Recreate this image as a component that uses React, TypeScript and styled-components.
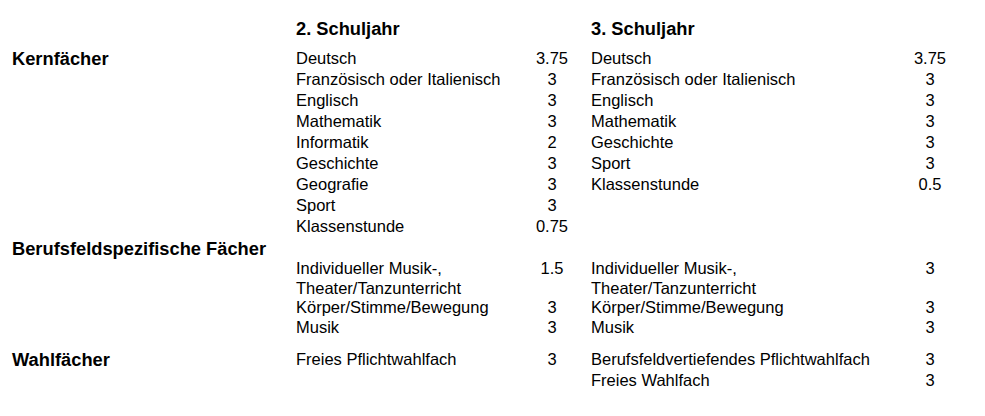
import styled, { createGlobalStyle } from 'styled-components';

type Subject = { name: string[]; hours: string };

type Section = {
  title: string;
  stacked?: boolean;
  lineHeight: number;
  gapTop: number;
  second: Subject[];
  third: Subject[];
};

const s = (name: string | string[], hours: string): Subject => ({
  name: Array.isArray(name) ? name : [name],
  hours,
});

const sections: Section[] = [
  {
    title: 'Kernfächer',
    lineHeight: 21,
    gapTop: 0,
    second: [
      s('Deutsch', '3.75'),
      s('Französisch oder Italienisch', '3'),
      s('Englisch', '3'),
      s('Mathematik', '3'),
      s('Informatik', '2'),
      s('Geschichte', '3'),
      s('Geografie', '3'),
      s('Sport', '3'),
      s('Klassenstunde', '0.75'),
    ],
    third: [
      s('Deutsch', '3.75'),
      s('Französisch oder Italienisch', '3'),
      s('Englisch', '3'),
      s('Mathematik', '3'),
      s('Geschichte', '3'),
      s('Sport', '3'),
      s('Klassenstunde', '0.5'),
    ],
  },
  {
    title: 'Berufsfeldspezifische Fächer',
    stacked: true,
    lineHeight: 19.7,
    gapTop: 1,
    second: [
      s(['Individueller Musik-,', 'Theater/Tanzunterricht'], '1.5'),
      s('Körper/Stimme/Bewegung', '3'),
      s('Musik', '3'),
    ],
    third: [
      s(['Individueller Musik-,', 'Theater/Tanzunterricht'], '3'),
      s('Körper/Stimme/Bewegung', '3'),
      s('Musik', '3'),
    ],
  },
  {
    title: 'Wahlfächer',
    lineHeight: 21,
    gapTop: 11,
    second: [s('Freies Pflichtwahlfach', '3')],
    third: [
      s('Berufsfeldvertiefendes Pflichtwahlfach', '3'),
      s('Freies Wahlfach', '3'),
    ],
  },
];

function YearList({ items, wide, lineHeight }: { items: Subject[]; wide?: boolean; lineHeight: number }) {
  return (
    <YearGrid $wide={wide} $lh={lineHeight}>
      {items.map((item, i) => (
        <Row key={i}>
          <SubjectName>
            {item.name.map((line, j) => (
              <span key={j}>
                {j > 0 && <br />}
                {line}
              </span>
            ))}
          </SubjectName>
          <Hours>{item.hours}</Hours>
        </Row>
      ))}
    </YearGrid>
  );
}

export default function App() {
  return (
    <>
      <GlobalStyle />
      <Page>
        <HeaderRow>
          <span />
          <YearTitle>2. Schuljahr</YearTitle>
          <YearTitle>3. Schuljahr</YearTitle>
        </HeaderRow>
        {sections.map((section) => (
          <SectionGrid key={section.title} $gapTop={section.gapTop}>
            <SectionTitle $stacked={section.stacked}>{section.title}</SectionTitle>
            {section.stacked && <span />}
            <YearList items={section.second} lineHeight={section.lineHeight} />
            <YearList items={section.third} lineHeight={section.lineHeight} wide />
          </SectionGrid>
        ))}
      </Page>
    </>
  );
}

const GlobalStyle = createGlobalStyle`
  html, body {
    margin: 0;
    background: #ffffff;
  }
  body {
    font-family: "Liberation Sans", Arial, sans-serif;
    color: #000000;
  }
`;

const Page = styled.div`
  width: 985px;
  height: 416px;
  box-sizing: border-box;
  padding: 18px 0 0 12px;
`;

const columns = `284px 295px 1fr`;

const HeaderRow = styled.div`
  display: grid;
  grid-template-columns: ${columns};
  margin-bottom: 9px;
`;

const YearTitle = styled.div`
  font-size: 18.3px;
  font-weight: 700;
  line-height: 21px;
`;

const SectionGrid = styled.div<{ $gapTop: number }>`
  display: grid;
  grid-template-columns: ${columns};
  align-items: start;
  margin-top: ${(p) => p.$gapTop}px;
`;

const SectionTitle = styled.div<{ $stacked?: boolean }>`
  font-size: 18.3px;
  font-weight: 700;
  line-height: 21px;
  grid-column: ${(p) => (p.$stacked ? '1 / -1' : 'auto')};
`;

const YearGrid = styled.div<{ $wide?: boolean; $lh: number }>`
  display: grid;
  grid-template-columns: ${(p) => (p.$wide ? '305px' : '222px')} 68px;
  font-size: 16.5px;
  line-height: ${(p) => p.$lh}px;
`;

const Row = styled.div`
  display: contents;
`;

const SubjectName = styled.div`
  white-space: nowrap;
`;

const Hours = styled.div`
  text-align: center;
`;
